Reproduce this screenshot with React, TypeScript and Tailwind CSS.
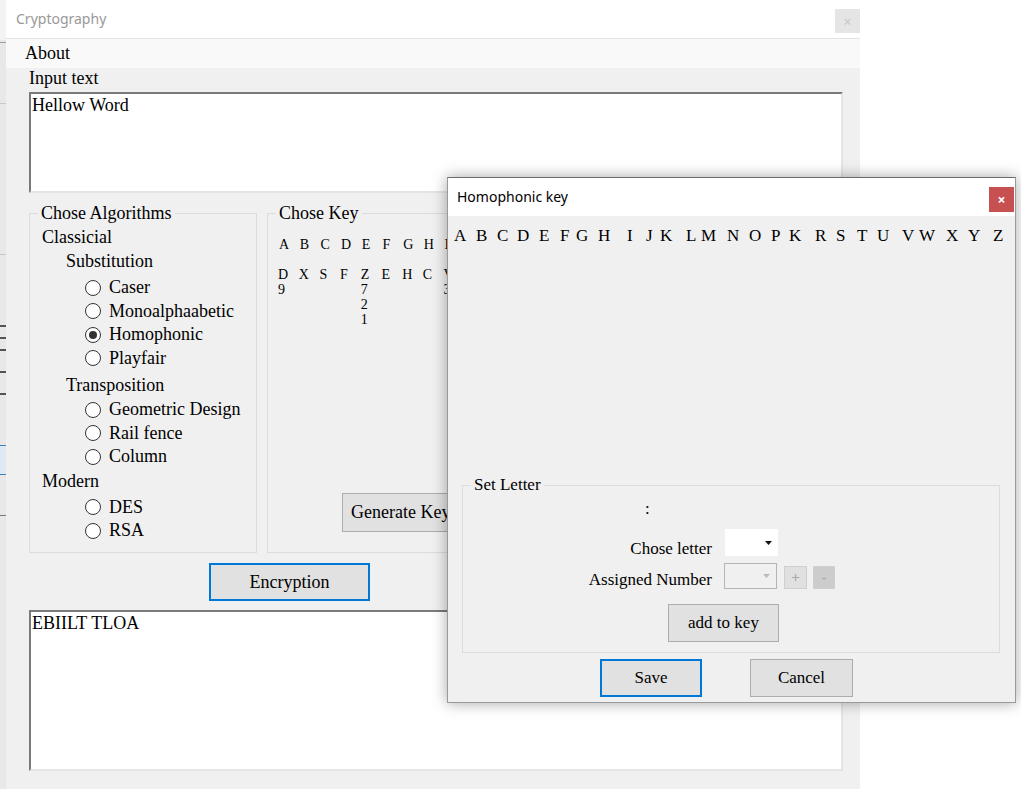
import React from 'react'

const serif = { fontFamily: '"Liberation Serif", "Times New Roman", serif' }
const ui = { fontFamily: '"Noto Sans", "Open Sans", sans-serif' }

function Radio({ label, checked }: { label: string; checked?: boolean }) {
  return (
    <div className="flex h-[23.5px] items-center pl-[55px]">
      <span className="flex h-[16px] w-[16px] items-center justify-center rounded-full border border-[#333] bg-white">
        {checked && <span className="h-[8px] w-[8px] rounded-full bg-[#333]" />}
      </span>
      <span className="ml-[8px]">{label}</span>
    </div>
  )
}

function Heading({ label, indent }: { label: string; indent: string }) {
  return <div className={`flex h-[24px] items-center ${indent}`}>{label}</div>
}

const row1 = 'ABCDEFGHIJKLMNOPQRSTUVWXYZ'.split('')
const row2: [string, string[]][] = [
  ['D', ['9']],
  ['X', []],
  ['S', []],
  ['F', []],
  ['Z', ['7', '2', '1']],
  ['E', []],
  ['H', []],
  ['C', []],
  ['V', ['3']],
  ['K', []],
  ['A', []],
]
const dlgLetters: [string, string][] = [
  ['A', 'w-[22px]'],
  ['B', 'w-[21px]'],
  ['C', 'w-[20px]'],
  ['D', 'w-[22px]'],
  ['E', 'w-[21px]'],
  ['F', 'w-[16px]'],
  ['G', 'w-[22px]'],
  ['H', 'w-[29px]'],
  ['I', 'w-[19px]'],
  ['J', 'w-[14px]'],
  ['K', 'w-[26px]'],
  ['L', 'w-[15px]'],
  ['M', 'w-[26px]'],
  ['N', 'w-[22px]'],
  ['O', 'w-[22px]'],
  ['P', 'w-[18px]'],
  ['K', 'w-[26px]'],
  ['R', 'w-[21px]'],
  ['S', 'w-[21px]'],
  ['T', 'w-[20px]'],
  ['U', 'w-[25px]'],
  ['V', 'w-[17px]'],
  ['W', 'w-[27px]'],
  ['X', 'w-[22px]'],
  ['Y', 'w-[25px]'],
  ['Z', 'w-[12px]'],
]

function InsetBox({ text, h }: { text: string; h: string }) {
  return (
    <div
      className={`${h} w-[814px] border-2 border-t-[#7a7a7a] border-l-[#7a7a7a] border-r-[#e4e4e4] border-b-[#e4e4e4] bg-white pl-[1px] text-[18px] leading-[22px] text-black`}
    >
      {text}
    </div>
  )
}

export default function App() {
  return (
    <div className="relative flex h-[789px] w-[1021px] overflow-hidden bg-white" style={serif}>
      {/* desktop strip behind */}
      <div className="flex w-[6px] flex-col bg-[#e8e8e8]">
        <div className="h-[40px] bg-[#f3f3f3]" />
        <div className="mt-[2px] h-[1px] bg-[#9aa0a8]" />
        <div className="mt-[60px] h-[1px] bg-[#c8c8c8]" />
        <div className="mt-[150px] h-[1px] bg-[#c8c8c8]" />
        <div className="mt-[70px] h-[2px] bg-[#555]" />
        <div className="mt-[10px] h-[2px] bg-[#555]" />
        <div className="mt-[10px] h-[2px] bg-[#555]" />
        <div className="mt-[20px] h-[2px] bg-[#555]" />
        <div className="mt-[20px] h-[2px] bg-[#555]" />
        <div className="mt-[50px] h-[30px] border-y border-[#3b82c4] bg-[#dfe9f3]" />
        <div className="mt-[40px] h-[1px] bg-[#777]" />
      </div>

      {/* main window */}
      <div className="flex h-full w-[854px] flex-col bg-[#f0f0f0]">
        <div className="flex h-[38px] items-start justify-between bg-white">
          <span className="ml-[10px] mt-[9px] text-[14px] leading-[20px] text-[#999]" style={ui}>
            Cryptography
          </span>
          <span
            className="mt-[9px] flex h-[24px] w-[25px] items-center justify-center bg-[#e5e5e5] text-[14px] text-[#c8c8c8]"
            style={ui}
          >
            ×
          </span>
        </div>
        <div className="flex h-[30px] items-center border-t border-[#e3e3e3] bg-[#f9f9f9] pl-[19px] text-[18px] text-black">
          About
        </div>

        <div className="flex flex-col pl-[23px] text-[18px] text-black">
          <div className="h-[20px] leading-[20px]">Input text</div>
          <div className="mt-[4px]">
            <InsetBox text="Hellow Word" h="h-[101px]" />
          </div>

          <div className="mt-[20px] flex gap-[10px]">
            {/* Chose Algorithms */}
            <div className="relative flex h-[340px] w-[228px] flex-col border border-[#dcdcdc] pt-[11px]">
              <span className="absolute -top-[12px] left-[8px] bg-[#f0f0f0] px-[3px] leading-[22px]">
                Chose Algorithms
              </span>
              <Heading label="Classicial" indent="pl-[12px]" />
              <Heading label="Substitution" indent="pl-[36px]" />
              <div className="mt-[3px]">
                <Radio label="Caser" />
                <Radio label="Monoalphaabetic" />
                <Radio label="Homophonic" checked />
                <Radio label="Playfair" />
              </div>
              <div className="mt-[3px]">
                <Heading label="Transposition" indent="pl-[36px]" />
              </div>
              <div className="mt-[1px]">
                <Radio label="Geometric Design" />
                <Radio label="Rail fence" />
                <Radio label="Column" />
              </div>
              <div className="mt-[1px]">
                <Heading label="Modern" indent="pl-[12px]" />
              </div>
              <div className="mt-[2px]">
                <Radio label="DES" />
                <Radio label="RSA" />
              </div>
            </div>

            {/* Chose Key */}
            <div className="relative flex h-[340px] w-[576px] flex-col border border-[#dcdcdc]">
              <span className="absolute -top-[12px] left-[8px] bg-[#f0f0f0] px-[3px] leading-[22px]">
                Chose Key
              </span>
              <div className="mt-[23px] flex pl-[11px] text-[14px] leading-[16px]">
                {row1.map((l, i) => (
                  <span key={i} className="w-[20.7px]">
                    {l}
                  </span>
                ))}
              </div>
              <div className="mt-[14px] flex pl-[10px] text-[14px] leading-[15px]">
                {row2.map(([l, nums], i) => (
                  <div key={i} className="flex w-[20.7px] flex-col">
                    <span>{l}</span>
                    {nums.map((n, j) => (
                      <span key={j}>{n}</span>
                    ))}
                  </div>
                ))}
              </div>
              <div className="mt-auto mb-[20px] ml-[74px] flex h-[39px] w-[130px] items-center border border-[#adadad] bg-[#e1e1e1] pl-[8px]">
                Generate Key
              </div>
            </div>
          </div>

          <div className="ml-[180px] mt-[10px] flex h-[38px] w-[161px] items-center justify-center border-2 border-[#0078d7] bg-[#e1e1e1]">
            Encryption
          </div>
          <div className="mt-[9px]">
            <InsetBox text="EBIILT TLOA" h="h-[161px]" />
          </div>
        </div>
      </div>

      {/* Homophonic key dialog */}
      <div className="absolute left-[447px] top-[177px] flex h-[526px] w-[569px] flex-col border border-t-[#6b6b6b] border-x-[#9a9a9a] border-b-[#9a9a9a] bg-[#f0f0f0] shadow-[0_0_14px_rgba(0,0,0,0.35)]">
        <div className="flex h-[38px] items-start justify-between bg-white">
          <span className="ml-[9px] mt-[9px] text-[14px] leading-[20px] text-black" style={ui}>
            Homophonic key
          </span>
          <span
            className="mr-[1px] mt-[9px] flex h-[25px] w-[25px] items-center justify-center bg-[#c75050] text-[14px] font-bold text-white"
            style={ui}
          >
            ×
          </span>
        </div>

        <div className="ml-[6px] mt-[9px] flex h-[22px] items-center text-[17px] text-black">
          {dlgLetters.map(([l, w], i) => (
            <span key={i} className={w}>
              {l}
            </span>
          ))}
        </div>

        <div className="relative ml-[14px] mt-[238px] flex h-[168px] w-[538px] flex-col border border-[#dcdcdc] text-[17px] text-black">
          <span className="absolute -top-[12px] left-[8px] bg-[#f0f0f0] px-[3px] leading-[22px]">Set Letter</span>
          <div className="mt-[13px] h-[20px] pl-[182px] leading-[20px]">:</div>
          <div className="mt-[10px] flex h-[27px] items-start">
            <span className="mt-[10px] w-[249px] text-right leading-[20px]">Chose letter</span>
            <div className="ml-[13px] flex h-[27px] w-[53px] items-center justify-end bg-white pr-[6px]">
              <svg width="7" height="4" viewBox="0 0 7 4">
                <path d="M0 0h7L3.5 4z" fill="#111" />
              </svg>
            </div>
          </div>
          <div className="mt-[7px] flex h-[26px] items-start">
            <span className="mt-[7px] w-[249px] text-right leading-[20px]">Assigned Number</span>
            <div className="ml-[12px] flex h-[26px] w-[53px] items-center justify-end border border-[#b5b5b5] bg-[#f0f0f0] pr-[6px]">
              <svg width="7" height="4" viewBox="0 0 7 4">
                <path d="M0 0h7L3.5 4z" fill="#bcbcbc" />
              </svg>
            </div>
            <div
              className="ml-[7px] mt-[3px] flex h-[23px] w-[23px] items-center justify-center border border-[#cfcfcf] bg-[#e0e0e0] text-[15px] text-[#a8a8a8]"
              style={ui}
            >
              +
            </div>
            <div
              className="ml-[6px] mt-[3px] flex h-[23px] w-[22px] items-center justify-center border border-[#cfcfcf] bg-[#cccccc] text-[14px] text-[#a0a0a0]"
              style={ui}
            >
              -
            </div>
          </div>
          <div className="ml-[205px] mt-[15px] flex h-[38px] w-[111px] items-center justify-center border border-[#adadad] bg-[#e1e1e1]">
            add to key
          </div>
        </div>

        <div className="ml-[152px] mt-[6px] flex gap-[48px] text-[17px] text-black">
          <div className="flex h-[38px] w-[102px] items-center justify-center border-2 border-[#0078d7] bg-[#e1e1e1]">
            Save
          </div>
          <div className="flex h-[38px] w-[103px] items-center justify-center border border-[#adadad] bg-[#e1e1e1]">
            Cancel
          </div>
        </div>
      </div>
    </div>
  )
}
